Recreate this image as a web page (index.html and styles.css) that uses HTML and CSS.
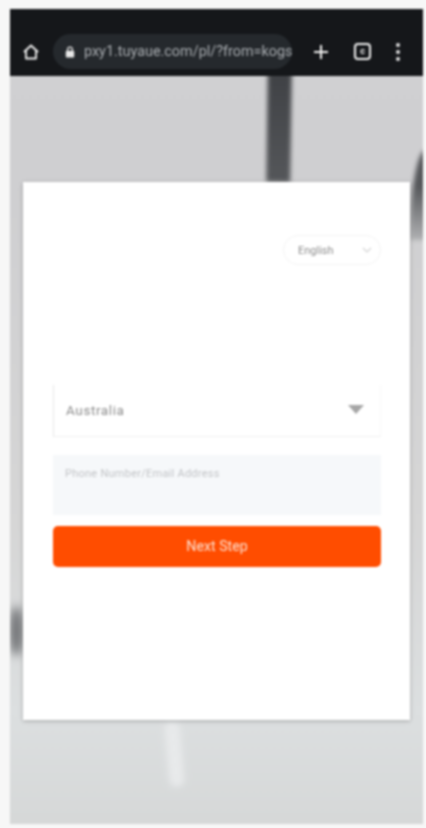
FILE: index.html
```html
<!DOCTYPE html>
<html lang="en">

<head>
    <meta charset="UTF-8">
    <meta name="viewport" content="width=device-width, initial-scale=1.0">
    <title>Login</title>
    <link rel="stylesheet" href="styles.css">
</head>

<body>
    <div class="phone">
        <!-- Browser toolbar -->
        <header class="toolbar">
            <svg class="home-icon" viewBox="0 0 18 18" width="18" height="18">
                <path d="M2 9 L9 2.5 L16 9 M4 7.5 V15.5 H14 V7.5" fill="none" stroke="#f2f2f2" stroke-width="1.8" stroke-linejoin="round"/>
            </svg>
            <div class="url-bar">
                <svg class="lock-icon" viewBox="0 0 10 12" width="10" height="12">
                    <path d="M2.6 5 V3.6 a2.4 2.4 0 0 1 4.8 0 V5" fill="none" stroke="#e8e8e8" stroke-width="1.2"/>
                    <rect x="0.8" y="4.8" width="8.4" height="6.6" rx="1" fill="#e8e8e8"/>
                </svg>
                <span class="url-text">pxy1.tuyaue.com/pl/?from=kogs</span>
            </div>
            <svg class="plus-icon" viewBox="0 0 16 16" width="16" height="16">
                <path d="M8 1 V15 M1 8 H15" stroke="#f2f2f2" stroke-width="2"/>
            </svg>
            <div class="tab-count">c</div>
            <div class="menu-dots"><i></i><i></i><i></i></div>
        </header>

        <main class="backdrop">
            <!-- Blurred wallpaper marks -->
            <div class="mark mark-bar"></div>
            <div class="mark mark-edge"></div>
            <div class="mark mark-smudge"></div>
            <div class="mark mark-streak"></div>

            <div class="card">
                <div class="lang-row">
                    <div class="lang-select">
                        <span>English</span>
                        <svg viewBox="0 0 10 6" width="10" height="6">
                            <path d="M1 1 L5 5 L9 1" fill="none" stroke="#d4d4d4" stroke-width="1.2"/>
                        </svg>
                    </div>
                </div>

                <div class="country-select">
                    <span>Australia</span>
                    <div class="caret"></div>
                </div>
                <div class="account-input">Phone Number/Email Address</div>
                <button type="button" class="next-btn">Next Step</button>
            </div>
        </main>
    </div>
</body>

</html>
```

FILE: styles.css
```css
body {
    font-family: 'Roboto', 'Liberation Sans', sans-serif;
    margin: 0;
    padding: 9px 3px 4px 10px;
    box-sizing: border-box;
    height: 828px;
    overflow: hidden;
    background-color: #f7f7f7;
}

.phone {
    height: 100%;
    display: flex;
    flex-direction: column;
    filter: blur(0.8px);
}

.toolbar {
    height: 67px;
    box-sizing: border-box;
    flex-shrink: 0;
    padding: 26px 0 8px 12px;
    display: flex;
    align-items: center;
    background-color: #15171a;
}

.home-icon {
    flex-shrink: 0;
}

.url-bar {
    width: 239px;
    height: 35px;
    margin-left: 13px;
    padding-left: 12px;
    box-sizing: border-box;
    flex-shrink: 0;
    display: flex;
    align-items: center;
    gap: 9px;
    overflow: hidden;
    border-radius: 18px;
    background-color: #25292d;
}

.lock-icon {
    flex-shrink: 0;
}

.url-text {
    color: #a9adb1;
    font-size: 14.4px;
    white-space: nowrap;
}

.plus-icon {
    margin-left: 21px;
    flex-shrink: 0;
}

.tab-count {
    width: 17px;
    height: 17px;
    margin-left: 25px;
    box-sizing: border-box;
    flex-shrink: 0;
    border: 2px solid #f2f2f2;
    border-radius: 4px;
    color: #f2f2f2;
    font-size: 9px;
    font-weight: bold;
    line-height: 12px;
    text-align: center;
}

.menu-dots {
    margin-left: 25px;
    display: flex;
    flex-direction: column;
    gap: 3px;
}

.menu-dots i {
    display: block;
    width: 4px;
    height: 4px;
    border-radius: 50%;
    background-color: #e2e2e2;
}

.backdrop {
    position: relative;
    flex: 1;
    padding: 106px 3px 104px 13px;
    overflow: hidden;
    background: linear-gradient(180deg, #d0d0d2 0%, #cfcfd1 14%, #d6d6d6 60%, #dcdfe0 85%, #d6d8d8 100%);
}

.mark {
    position: absolute;
    filter: blur(2px);
}

.mark-bar {
    left: 257px;
    top: -4px;
    width: 24px;
    height: 110px;
    background: linear-gradient(180deg, #3f4145, #55575a);
    transform: rotate(0.8deg);
}

.mark-edge {
    left: 400px;
    top: 74px;
    width: 16px;
    height: 90px;
    border-radius: 100% 0 0 0;
    background: linear-gradient(180deg, #55575a 40%, #b0b1b3 100%);
}

.mark-smudge {
    left: 0;
    top: 530px;
    width: 13px;
    height: 50px;
    border-radius: 50%;
    background-color: #6a6c6f;
    filter: blur(5px);
}

.mark-streak {
    left: 157px;
    top: 645px;
    width: 15px;
    height: 66px;
    border-radius: 8px;
    background-color: #e8eaeb;
    transform: rotate(-5deg);
    filter: blur(3px);
}

.card {
    position: relative;
    height: 538px;
    width: 387px;
    padding: 53px 29px 0 30px;
    box-sizing: border-box;
    background-color: #fff;
    box-shadow: 0 1px 4px rgba(0, 0, 0, 0.25);
}

.lang-row {
    display: flex;
    justify-content: flex-end;
    margin-bottom: 120px;
}

.lang-select {
    width: 98px;
    height: 30px;
    padding: 0 8px 0 14px;
    box-sizing: border-box;
    display: flex;
    align-items: center;
    justify-content: space-between;
    border: 1px solid #f4f4f4;
    border-radius: 15px;
    color: #8d8d8d;
    font-size: 11px;
}

.country-select {
    height: 52px;
    padding: 0 16px 2px 12px;
    box-sizing: border-box;
    display: flex;
    align-items: center;
    justify-content: space-between;
    border-left: 1px solid #e6e6e6;
    border-bottom: 1px solid #f0f0f0;
    border-right: 1px solid #f8f8f8;
    color: #8c8c8c;
    font-size: 13.5px;
    letter-spacing: 0.6px;
}

.caret {
    width: 0;
    height: 0;
    border-left: 8px solid transparent;
    border-right: 8px solid transparent;
    border-top: 9px solid #a6a6a6;
}

.account-input {
    height: 60px;
    margin-top: 18px;
    padding: 12px 12px 0;
    box-sizing: border-box;
    background-color: #f6f8fa;
    color: #c2c4c7;
    font-size: 11px;
    letter-spacing: 0.25px;
}

.next-btn {
    display: block;
    width: 100%;
    height: 41px;
    margin-top: 11px;
    padding-bottom: 3px;
    border: none;
    border-radius: 5px;
    background-color: #ff4d00;
    color: #fde2d2;
    font-family: inherit;
    font-size: 14.2px;
}
```
